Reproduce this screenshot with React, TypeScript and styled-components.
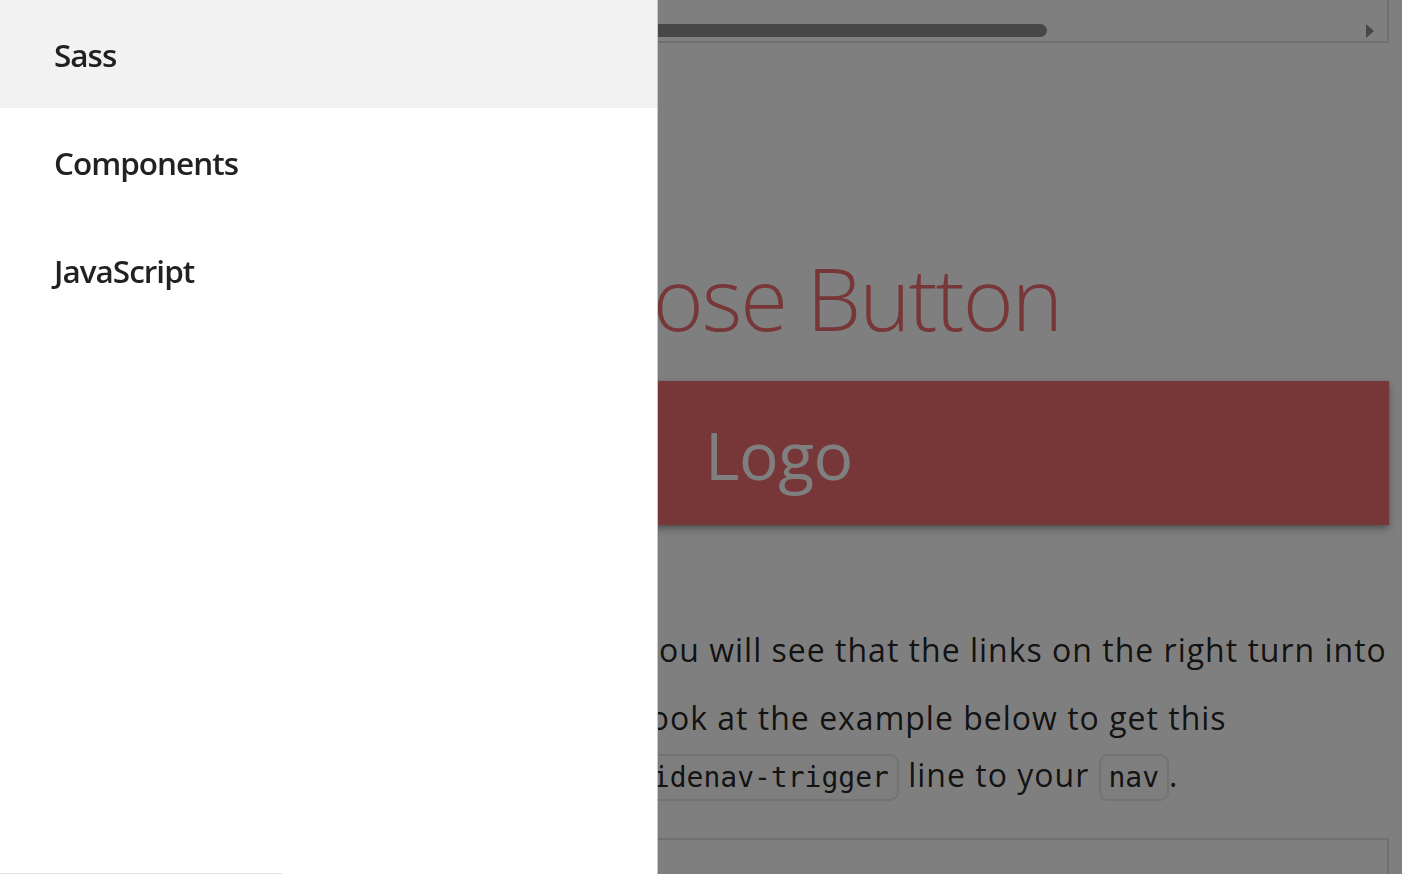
import React from "react";
import styled, { createGlobalStyle } from "styled-components";

const Global = createGlobalStyle`
  html, body { margin: 0; padding: 0; }
  body {
    background: #ffffff;
    font-family: "Open Sans", "Noto Sans", sans-serif;
    color: rgba(0, 0, 0, 0.87);
    overflow: hidden;
    height: 874px;
  }
`;

const Page = styled.div`
  width: 1402px;
  height: 874px;
  overflow: hidden;
`;

const Main = styled.main`
  padding: 0 13px 0 560px;
  display: flex;
  flex-direction: column;
`;

const ScrollBox = styled.div`
  height: 43px;
  box-sizing: border-box;
  border: 2px solid #e0e0e0;
  border-top: none;
  display: flex;
  align-items: center;
  padding: 22px 13px 2px 0;
`;

const ScrollThumb = styled.div`
  width: 485px;
  height: 13px;
  border-radius: 7px;
  background: #8e8e8e;
`;

const ScrollSpacer = styled.div`
  flex: 1;
`;

const ScrollArrow = styled.div`
  width: 0;
  height: 0;
  border-top: 7px solid transparent;
  border-bottom: 7px solid transparent;
  border-left: 8px solid #8e8e8e;
`;

const Heading = styled.h1<{ $lead: number }>`
  margin: 199px 0 0;
  padding-left: ${(p) => p.$lead}px;
  font-size: 87px;
  line-height: 110px;
  font-weight: 300;
  letter-spacing: -2px;
  color: #ee6e73;
  white-space: nowrap;
`;

const DemoNav = styled.nav`
  margin-top: 29px;
  height: 144px;
  background: #ee6e73;
  box-shadow: 0 4px 10px rgba(0, 0, 0, 0.25), 0 2px 4px rgba(0, 0, 0, 0.2);
  display: flex;
  align-items: center;
  padding-left: 145px;
`;

const Brand = styled.span`
  font-size: 66px;
  line-height: 144px;
  padding-top: 2px;
  letter-spacing: -0.5px;
  color: #ffffff;
`;

const Paragraph = styled.p<{ $top: number }>`
  margin: ${(p) => p.$top}px 0 0;
  font-size: 32px;
  line-height: 57px;
  letter-spacing: 1px;
  white-space: nowrap;
`;

const Line = styled.span<{ $lead: number }>`
  display: block;
  padding-left: ${(p) => p.$lead}px;
`;

const Code = styled.code`
  font-family: "DejaVu Sans Mono", "Liberation Mono", monospace;
  font-size: 28px;
  letter-spacing: 0;
  padding: 5px 8px;
  border: 2px solid #e6e6e6;
  border-radius: 9px;
  background: #fdfdfd;
`;

const ExampleBox = styled.div`
  margin-top: 32px;
  height: 120px;
  border: 2px solid #e0e0e0;
`;

const Overlay = styled.div`
  position: fixed;
  inset: 0;
  background: rgba(0, 0, 0, 0.5);
  z-index: 1;
`;

const Sidenav = styled.ul`
  position: fixed;
  top: 0;
  left: 0;
  z-index: 2;
  width: 657px;
  height: 874px;
  margin: 0;
  padding: 0;
  list-style: none;
  background: #ffffff;
  display: flex;
  flex-direction: column;
  box-shadow: 1px 0 0 #c8c8c8;
`;

const NavItem = styled.li<{ $active?: boolean }>`
  height: 108px;
  display: flex;
  align-items: center;
  padding-left: 54px;
  background: ${(p) => (p.$active ? "#f2f2f2" : "transparent")};
`;

const NavLink = styled.a`
  font-size: 31.5px;
  font-weight: 600;
  letter-spacing: -1px;
  color: rgba(0, 0, 0, 0.87);
  text-decoration: none;
`;

const NavFooter = styled.li`
  margin-top: auto;
  width: 282px;
  height: 0;
  border-top: 1px solid #e0e0e0;
`;

export default function App() {
  return (
    <Page>
      <Global />
      <Main>
        <ScrollBox>
          <ScrollThumb />
          <ScrollSpacer />
          <ScrollArrow />
        </ScrollBox>
        <Heading $lead={23}>Close Button</Heading>
        <DemoNav>
          <Brand>Logo</Brand>
        </DemoNav>
        <Paragraph $top={96}>
          <Line $lead={82}>you will see that the links on the right turn into</Line>
        </Paragraph>
        <Paragraph $top={11}>
          <Line $lead={72}>Look at the example below to get this</Line>
          <Line $lead={66}>
            <Code>sidenav-trigger</Code> line to your <Code>nav</Code>.
          </Line>
        </Paragraph>
        <ExampleBox />
      </Main>
      <Overlay />
      <Sidenav>
        <NavItem $active>
          <NavLink href="#">Sass</NavLink>
        </NavItem>
        <NavItem>
          <NavLink href="#">Components</NavLink>
        </NavItem>
        <NavItem>
          <NavLink href="#">JavaScript</NavLink>
        </NavItem>
        <NavFooter />
      </Sidenav>
    </Page>
  );
}
